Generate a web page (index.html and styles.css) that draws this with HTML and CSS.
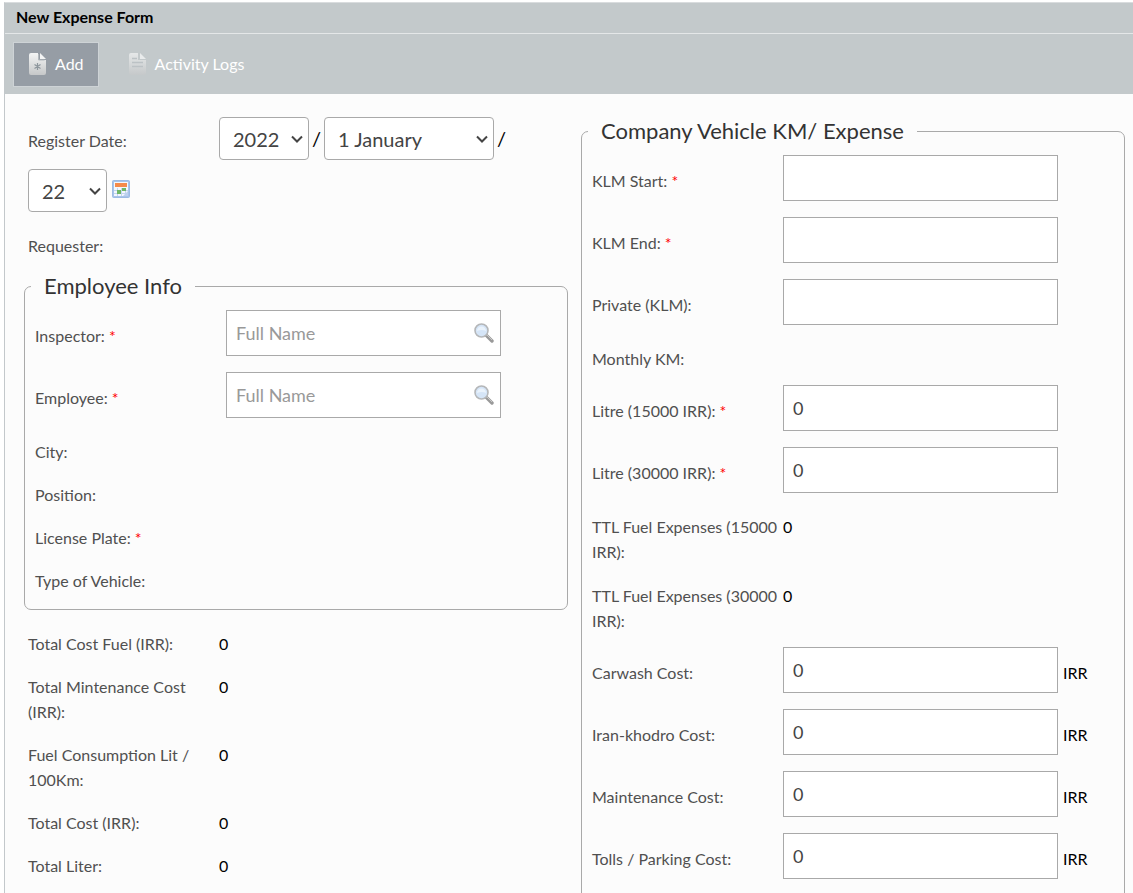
FILE: index.html
```html
<!DOCTYPE html>
<html lang="en">
<head>
    <meta charset="UTF-8">
    <meta name="viewport" content="width=device-width, initial-scale=1.0">
    <title>New Expense Form</title>
    <link rel="stylesheet" href="styles.css">
</head>
<body>
    <div class="window">
        <h1 class="title">New Expense Form</h1>
        <div class="toolbar">
            <button type="button" class="tool active">
                <svg width="18" height="22" viewBox="0 0 18 22">
                    <defs>
                        <linearGradient id="paper" x1="0" y1="0" x2="0" y2="1">
                            <stop offset="0" stop-color="#f4f5f5"/>
                            <stop offset="1" stop-color="#c6c8c9"/>
                        </linearGradient>
                    </defs>
                    <path d="M2 0h7v7h8v13q0 2-2 2H2q-2 0-2-2V2q0-2 2-2z" fill="url(#paper)"/>
                    <path d="M11 0l6 6h-6z" fill="#f4f5f5"/>
                    <path d="M9.5 1v6h6" stroke="#b3b9bd" fill="none"/>
                    <path d="M8.500 10v7M5.500 11.500l6 4M11.500 11.500l-6 4" stroke="#8d969c" stroke-width="1.2" fill="none"/>
                </svg>
                Add
            </button>
            <button type="button" class="tool">
                <svg width="18" height="22" viewBox="0 0 18 22">
                    <path d="M2 0h7v7h8v13q0 2-2 2H2q-2 0-2-2V2q0-2 2-2z" fill="url(#paper)" opacity=".7"/>
                    <path d="M11 0l6 6h-6z" fill="#e9ebec"/>
                    <path d="M3 5.5h5M3 9.5h11M3 13.5h11" stroke="#bcc2c5" stroke-width="1.3"/>
                </svg>
                Activity Logs
            </button>
        </div>

        <form class="columns">
            <div class="column">
                <div class="date-row">
                    <label class="label" for="year">Register Date:</label>
                    <select id="year" class="year"><option>2022</option></select>
                    <span class="slash">/</span>
                    <select class="month" aria-label="Month"><option>1 January</option></select>
                    <span class="slash">/</span>
                    <select class="day" aria-label="Day"><option>22</option></select>
                    <button type="button" class="icon-button" aria-label="Pick a date">
                        <svg width="18" height="18" viewBox="0 0 18 18">
                            <rect x=".5" y=".5" width="17" height="17" rx="1" fill="#a9c4ea" stroke="#9dbbe4"/>
                            <rect x="2" y="2" width="14" height="14" fill="#f3f7fd"/>
                            <rect x="3" y="3" width="12" height="4" fill="#f58a4b"/>
                            <path d="M2 10.5h14M2 13.5h14M5.5 8v8M9.5 8v8M13.5 8v8" stroke="#c3d5ef"/>
                            <path d="M10 8h4v3h-4zM5 10h4v4H5z" fill="#6fb768"/>
                            <path d="M16 11v5h-5z" fill="#bcd0ee"/>
                        </svg>
                    </button>
                </div>
                <div class="row"><span class="label">Requester:</span></div>

                <fieldset class="employee">
                    <legend>Employee Info</legend>
                    <div class="row input-row">
                        <label class="label" for="inspector">Inspector: <span class="req">*</span></label>
                        <div class="lookup">
                            <input type="text" id="inspector" placeholder="Full Name">
                            <button type="button" class="icon-button" aria-label="Find inspector">
                                <svg width="20" height="20" viewBox="0 0 20 20">
                                    <path d="M12 12l6 6" stroke="#999" stroke-width="3.4" stroke-linecap="round"/>
                                    <path d="M13 12l5 5" stroke="#c8c8c8" stroke-width="1"/>
                                    <circle cx="7.5" cy="7.5" r="6.5" fill="#d5e5f7" stroke="#b5b7b9" stroke-width="1.6"/>
                                    <path d="M3 8a4.5 4.5 0 0 1 9 0q-4-2-9 0z" fill="#eaf3fc"/>
                                </svg>
                            </button>
                        </div>
                    </div>
                    <div class="row input-row">
                        <label class="label" for="employee">Employee: <span class="req">*</span></label>
                        <div class="lookup">
                            <input type="text" id="employee" placeholder="Full Name">
                            <button type="button" class="icon-button" aria-label="Find employee">
                                <svg width="20" height="20" viewBox="0 0 20 20">
                                    <path d="M12 12l6 6" stroke="#999" stroke-width="3.4" stroke-linecap="round"/>
                                    <path d="M13 12l5 5" stroke="#c8c8c8" stroke-width="1"/>
                                    <circle cx="7.5" cy="7.5" r="6.5" fill="#d5e5f7" stroke="#b5b7b9" stroke-width="1.6"/>
                                    <path d="M3 8a4.5 4.5 0 0 1 9 0q-4-2-9 0z" fill="#eaf3fc"/>
                                </svg>
                            </button>
                        </div>
                    </div>
                    <div class="row"><span class="label">City:</span></div>
                    <div class="row"><span class="label">Position:</span></div>
                    <div class="row"><span class="label">License Plate: <span class="req">*</span></span></div>
                    <div class="row"><span class="label">Type of Vehicle:</span></div>
                </fieldset>

                <div class="totals">
                    <div class="row"><span class="label">Total Cost Fuel (IRR):</span><span>0</span></div>
                    <div class="row"><span class="label">Total Mintenance Cost (IRR):</span><span>0</span></div>
                    <div class="row"><span class="label">Fuel Consumption Lit / 100Km:</span><span>0</span></div>
                    <div class="row"><span class="label">Total Cost (IRR):</span><span>0</span></div>
                    <div class="row"><span class="label">Total Liter:</span><span>0</span></div>
                </div>
            </div>

            <fieldset class="vehicle">
                <legend>Company Vehicle KM/ Expense</legend>
                <div class="row input-row">
                    <label class="label" for="klm-start">KLM Start: <span class="req">*</span></label>
                    <input type="text" id="klm-start">
                </div>
                <div class="row input-row">
                    <label class="label" for="klm-end">KLM End: <span class="req">*</span></label>
                    <input type="text" id="klm-end">
                </div>
                <div class="row input-row">
                    <label class="label" for="private">Private (KLM):</label>
                    <input type="text" id="private">
                </div>
                <div class="row"><span class="label">Monthly KM:</span></div>
                <div class="row input-row">
                    <label class="label" for="litre15">Litre (15000 IRR): <span class="req">*</span></label>
                    <input type="text" id="litre15" value="0">
                </div>
                <div class="row input-row">
                    <label class="label" for="litre30">Litre (30000 IRR): <span class="req">*</span></label>
                    <input type="text" id="litre30" value="0">
                </div>
                <div class="row"><span class="label">TTL Fuel Expenses (15000 IRR):</span><span>0</span></div>
                <div class="row"><span class="label">TTL Fuel Expenses (30000 IRR):</span><span>0</span></div>
                <div class="row input-row">
                    <label class="label" for="carwash">Carwash Cost:</label>
                    <input type="text" id="carwash" value="0">
                    <span class="unit">IRR</span>
                </div>
                <div class="row input-row">
                    <label class="label" for="khodro">Iran-khodro Cost:</label>
                    <input type="text" id="khodro" value="0">
                    <span class="unit">IRR</span>
                </div>
                <div class="row input-row">
                    <label class="label" for="maintenance">Maintenance Cost:</label>
                    <input type="text" id="maintenance" value="0">
                    <span class="unit">IRR</span>
                </div>
                <div class="row input-row">
                    <label class="label" for="tolls">Tolls / Parking Cost:</label>
                    <input type="text" id="tolls" value="0">
                    <span class="unit">IRR</span>
                </div>
            </fieldset>
        </form>
    </div>
</body>
</html>
```
FILE: styles.css
```css
* {
    box-sizing: border-box;
}
body {
    margin: 0;
    padding: 2px 0 0 4px;
    background: #fff;
    color: #000;
    font-family: Lato, "Liberation Sans", sans-serif;
    font-size: 16px;
    line-height: 25px;
}
button, input, select {
    font-family: inherit;
}
.window {
    min-height: 100vh;
    background: #fcfcfc;
    border-top: 1px solid #d9dcde;
    border-left: 1px solid #c3c8cb;
}
.title {
    margin: 0;
    padding: 1px 11px 4px;
    background: #c3c9cb;
    border-bottom: 1px solid #e4e7e8;
    font-size: 16px;
    font-weight: bold;
}
.toolbar {
    display: flex;
    gap: 14px;
    padding: 8px 8px 7px;
    background: #c3c9cb;
}
.tool {
    display: flex;
    align-items: center;
    gap: 8px;
    height: 45px;
    padding: 0 14px 2px 15px;
    border: 1px solid transparent;
    background: none;
    color: #fff;
    font-size: 16px;
}
.tool.active {
    background: #969da5;
    border-color: #ced3d6;
}
.columns {
    display: grid;
    grid-template-columns: 1fr 1fr;
    gap: 13px;
    align-items: start;
    padding: 19px 8px 0 19px;
}
.date-row {
    display: flex;
    flex-wrap: wrap;
    align-items: center;
    row-gap: 9px;
    padding: 4px 4px 12px;
}
.date-row .label {
    padding-top: 4px;
}
.column > .row,
.totals .row {
    padding-left: 4px;
}
.row {
    display: flex;
    padding: 9px 0;
}
.label {
    flex: none;
    width: 191px;
    color: #505050;
}
.req {
    color: #f00;
}
fieldset .row {
    padding: 11px 0 7px;
}
fieldset .input-row {
    padding: 6px 0 10px;
}
.input-row .label,
.unit {
    padding-top: 13px;
}
.unit {
    padding-left: 5px;
}
input {
    width: 275px;
    height: 46px;
    padding: 0 9px;
    border: 1px solid #a9a9a9;
    background: #fff;
    color: #444;
    font-size: 18px;
}
input::placeholder {
    color: #999;
}
.lookup {
    position: relative;
}
.lookup .icon-button {
    position: absolute;
    top: 13px;
    right: 7px;
}
.icon-button {
    display: flex;
    padding: 0;
    border: none;
    background: none;
}
.date-row .icon-button {
    margin: 0 0 4px 5px;
}
select {
    appearance: none;
    height: 43px;
    padding: 0 13px;
    border: 1px solid #a9a9a9;
    border-radius: 4px;
    background: #fff url("data:image/svg+xml,%3Csvg xmlns='http://www.w3.org/2000/svg' width='12' height='8'%3E%3Cpath d='M1 1.500l5 5 5-5' fill='none' stroke='%23444' stroke-width='2'/%3E%3C/svg%3E") no-repeat right 5px center;
    color: #444;
    font-size: 20px;
}
.year {
    width: 90px;
}
.month {
    width: 170px;
}
.day {
    width: 79px;
}
.slash {
    width: 15px;
    text-align: center;
    font-size: 20px;
}
fieldset {
    min-width: 0;
    margin: 0;
    padding: 0 10px;
    border: 1px solid #a9a9a9;
    border-radius: 7px;
}
legend {
    margin-left: -4px;
    padding: 0 13px;
    color: #333;
    font-size: 22px;
    line-height: 36px;
}
.employee {
    margin-top: 1px;
    padding-bottom: 9px;
}
.totals {
    padding-top: 12px;
}
.vehicle {
    min-height: 100vh;
}
.vehicle .row:not(.input-row) {
    padding-bottom: 8px;
}
```
